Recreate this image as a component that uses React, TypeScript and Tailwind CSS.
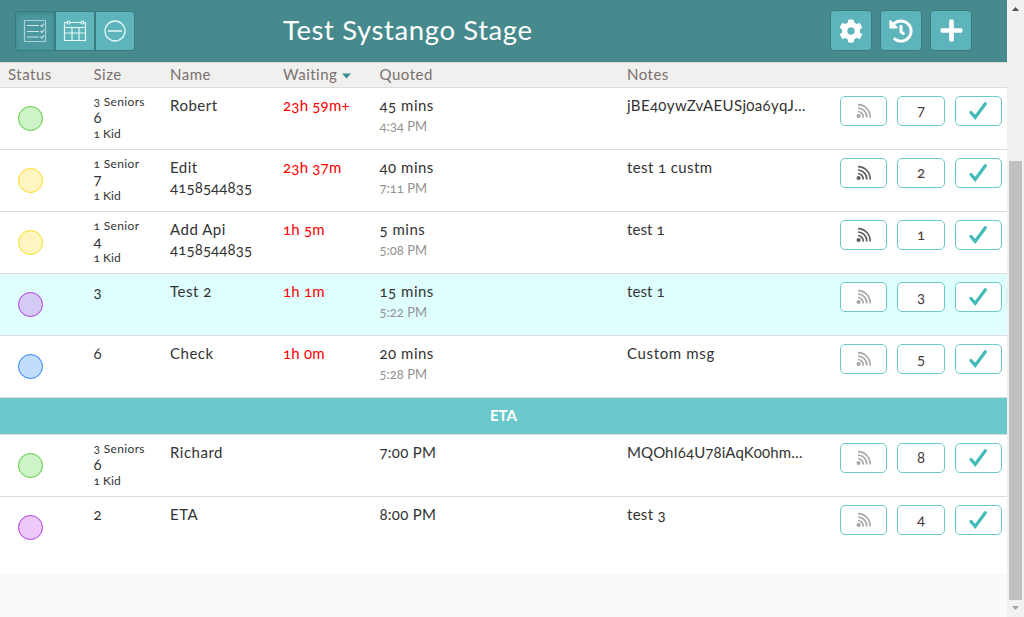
import React from "react";
import { FaCog, FaHistory, FaPlus } from "react-icons/fa";

type Party = {
  tone: string;
  seniors?: string;
  size: string;
  kids?: string;
  name: string;
  phone?: string;
  wait?: string;
  quoted: string;
  time?: string;
  notes: string;
  noteTrack: string;
  table: string;
  notified?: boolean;
  selected?: boolean;
  last?: boolean;
};

const green = "border-[#55cf3c] bg-[#cff3c8]";
const yellow = "border-[#fade22] bg-[#fef5c0]";

const waiting: Party[] = [
  { tone: green, seniors: "3 Seniors", size: "6", kids: "1 Kid", name: "Robert", wait: "23h 59m+", quoted: "45 mins", time: "4:34 PM", notes: "jBE40ywZvAEUSj0a6yqJ…", noteTrack: "tracking-[0.35px]", table: "7" },
  { tone: yellow, seniors: "1 Senior", size: "7", kids: "1 Kid", name: "Edit", phone: "4158544835", wait: "23h 37m", quoted: "40 mins", time: "7:11 PM", notes: "test 1 custm", noteTrack: "tracking-[0.4px]", table: "2", notified: true },
  { tone: yellow, seniors: "1 Senior", size: "4", kids: "1 Kid", name: "Add Api", phone: "4158544835", wait: "1h 5m", quoted: "5 mins", time: "5:08 PM", notes: "test 1", noteTrack: "tracking-[0.1px]", table: "1", notified: true },
  { tone: "border-[#b43be0] bg-[#d5c9f5]", size: "3", name: "Test 2", wait: "1h 1m", quoted: "15 mins", time: "5:22 PM", notes: "test 1", noteTrack: "tracking-[0.1px]", table: "3", selected: true },
  { tone: "border-[#2188f8] bg-[#c2dcfb]", size: "6", name: "Check", wait: "1h 0m", quoted: "20 mins", time: "5:28 PM", notes: "Custom msg", noteTrack: "tracking-[0.65px]", table: "5" },
];

const eta: Party[] = [
  { tone: green, seniors: "3 Seniors", size: "6", kids: "1 Kid", name: "Richard", quoted: "7:00 PM", notes: "MQOhI64U78iAqK00hm…", noteTrack: "tracking-[0.1px]", table: "8" },
  { tone: "border-[#b43be0] bg-[#ecc9f8]", size: "2", name: "ETA", quoted: "8:00 PM", notes: "test 3", noteTrack: "tracking-[0.3px]", table: "4", last: true },
];

const columns = "grid grid-cols-[93.5px_76.5px_113px_96.5px_247.5px_213px_1fr]";

function SignalIcon({ active }: { active?: boolean }) {
  return (
    <svg width="16" height="16" viewBox="0 0 16 16" fill="none" strokeWidth="1.7" className={active ? "stroke-[#606060]" : "stroke-[#a8a8a8]"}>
      <circle cx="2.6" cy="13" r="1.1" strokeWidth="2" />
      <path d="M2 8.5A5.6 5.6 0 0 1 7.2 14.5M2 5A9 9 0 0 1 10.8 14.5M2 1.6A12.4 12.4 0 0 1 14.2 14.5" />
    </svg>
  );
}

function CheckIcon() {
  return (
    <svg width="20" height="20" viewBox="0 0 20 20" fill="none" stroke="#43bbb8" strokeWidth="3.2" strokeLinecap="round">
      <path d="M2 11.5L6.2 16.4L16.3 2.8" />
    </svg>
  );
}

function Row({ p }: { p: Party }) {
  return (
    <div className={`${columns} ${p.last ? "h-[77px]" : "h-[62px] border-b border-[#dcdcdc]"} ${p.selected ? "bg-[#dfffff]" : "bg-white"} text-[15px] leading-5 text-[#333]`}>
      <div className="pt-[18px] pl-[18px]">
        <div className={`size-[25px] rounded-full border ${p.tone}`} />
      </div>
      <div className={`${p.seniors ? "pt-[6px]" : "pt-[7px]"} leading-4`}>
        {p.seniors && <div className="text-[12px] tracking-[0.35px]">{p.seniors}</div>}
        <div className={p.seniors ? "-mt-px mb-px" : "leading-5"}>{p.size}</div>
        {p.kids && <div className="text-[12px]">{p.kids}</div>}
      </div>
      <div className="pt-[7px] tracking-[0.5px]">
        <div>{p.name}</div>
        {p.phone && <div className="tracking-[0.12px]">{p.phone}</div>}
      </div>
      <div className="pt-[7px] tracking-[0.22px] text-[#ff0000]">{p.wait}</div>
      <div className="pt-[7px]">
        <div className={p.time ? "tracking-[0.5px]" : "tracking-[0.25px]"}>{p.quoted}</div>
        {p.time && <div className="text-[13px] leading-[22px] text-[#929292]">{p.time}</div>}
      </div>
      <div className={`pt-[7px] whitespace-nowrap ${p.noteTrack}`}>{p.notes}</div>
      <div className="flex gap-[10px] pt-2">
        <button className="flex h-[30px] w-[47px] items-center justify-center rounded-[5px] border border-[#6bc9cc] bg-white"><SignalIcon active={p.notified} /></button>
        <button className="h-[30px] w-12 rounded-[5px] border border-[#6bc9cc] bg-white pb-[2px] text-[#443b3b]">{p.table}</button>
        <button className="flex h-[30px] w-[47px] items-center justify-center rounded-[5px] border border-[#6bc9cc] bg-white"><CheckIcon /></button>
      </div>
    </div>
  );
}

const action = "flex h-[41px] w-[42px] items-center justify-center rounded-[4px] border border-[#387c80] bg-[#5db4ba] text-white";

export default function App() {
  return (
    <div className="flex h-[617px] w-[1024px] overflow-hidden bg-[#fafafa] font-['Lato','Open_Sans',sans-serif] [font-feature-settings:'onum'_1]">
      <main className="w-[1007px]">
        <header className="grid h-[62px] grid-cols-[283px_547px_1fr] bg-[#468a8d]">
          <div className="flex pt-[11px] pl-[15px]">
            <button className="flex h-10 w-[41px] items-center justify-center rounded-l-[3px] border border-r-2 border-[#387c80] bg-[#4b999f] shadow-[inset_0_2px_4px_#0002]">
              <svg width="24" height="24" viewBox="0 0 24 24" fill="none" stroke="#c8e3e5" strokeWidth="1.2">
                <path d="M1.5 1.5h21v21h-21z" opacity=".75" />
                <path d="M4 6.5h12M4 12.5h12M4 18h12M17.5 6l1.5 1.5 2-3M17.5 12l1.5 1.5 2-3M17.5 17.5l1.5 1.5 2-3" />
              </svg>
            </button>
            <button className="flex h-10 w-10 items-center justify-center border-y border-r-2 border-[#387c80] bg-[#5db4ba]">
              <svg width="24" height="24" viewBox="0 0 24 24" fill="none" stroke="#e5f7f7" strokeWidth="1.2">
                <path d="M1.5 3.5h21v18h-21zM1.5 8.5h21M1.5 14h21M9 8.5v13M16 8.5v13" />
                <circle cx="5.5" cy="3.5" r="1.5" fill="#5db4ba" /><circle cx="19.5" cy="3.5" r="1.5" fill="#5db4ba" />
              </svg>
            </button>
            <button className="flex h-10 w-[39px] items-center justify-center rounded-r-[3px] border-y border-r border-[#387c80] bg-[#5db4ba]">
              <svg width="24" height="24" viewBox="0 0 24 24" fill="none" stroke="#e5f7f7" strokeWidth="1.3">
                <circle cx="12" cy="12" r="10" /><path d="M5 12h14" strokeWidth="2" stroke="#c5e7e8" />
              </svg>
            </button>
          </div>
          <h1 className="pt-[10px] text-[27.5px] leading-[40px] tracking-[0.6px] text-white">Test Systango Stage</h1>
          <div className="flex gap-[8px] pt-[10px]">
            <button className={action}><FaCog size={24} /></button>
            <button className={action}><FaHistory size={24} /></button>
            <button className={action}><FaPlus size={25} /></button>
          </div>
        </header>
        <div className={`${columns} h-[26px] border-y border-[#dcdcdc] bg-[#f0f0ee] text-[15px] leading-[22px] tracking-[0.5px] text-[#7b7070]`}>
          <div className="pl-2">Status</div><div>Size</div><div>Name</div>
          <div className="flex gap-[5px]">Waiting<svg width="9" height="6" viewBox="0 0 9 6" className="mt-[10px] fill-[#378f91]"><path d="M0 .5h9L4.5 5.5z" /></svg></div>
          <div>Quoted</div><div>Notes</div><div />
        </div>
        {waiting.map((p) => <Row key={p.name} p={p} />)}
        <div className="h-[37px] border-b border-[#dcdcdc] bg-[#6bc9cc] text-center text-[15px] leading-[34px] font-bold text-white">ETA</div>
        {eta.map((p) => <Row key={p.name} p={p} />)}
      </main>
      <aside className="flex w-[17px] flex-col items-center bg-[#f1f1f1]">
        <svg width="17" height="161" viewBox="0 0 17 161" className="shrink-0 fill-[#505050]"><path d="M5 11h7L8.5 7z" /></svg>
        <div className="h-[439px] w-[13px] shrink-0 bg-[#c1c1c1]" />
        <svg width="17" height="17" viewBox="0 0 17 17" className="shrink-0 fill-[#a3a3a3]"><path d="M5 6h7l-3.5 4z" /></svg>
      </aside>
    </div>
  );
}
